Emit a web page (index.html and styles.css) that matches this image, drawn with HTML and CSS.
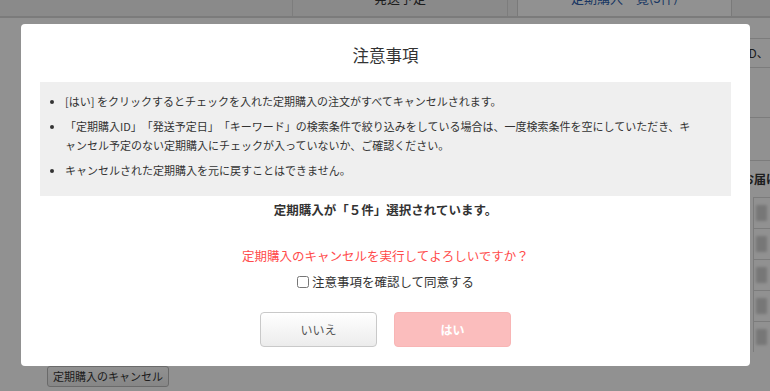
FILE: index.html
```html
<!DOCTYPE html>
<html lang="ja">
<head>
    <meta charset="UTF-8">
    <meta name="viewport" content="width=device-width, initial-scale=1.0">
    <title>定期購入のキャンセル</title>
    <link rel="stylesheet" href="styles.css">
</head>
<body>
    <div class="page">
        <div class="thead">
            <div class="th th-first"></div>
            <div class="th th-date">発送予定</div>
            <div class="th-gap"></div>
            <div class="th th-tab">定期購入一覧(5件)</div>
            <div class="th th-rest"></div>
        </div>

        <div class="page-body">
            <div class="main">
                <div class="main-fill"></div>
                <button class="btn-small">定期購入のキャンセル</button>
            </div>

            <div class="side">
                <div class="side-row side-row1"></div>
                <div class="side-row side-row2"><span class="side-text">ID、</span></div>
                <div class="side-row side-row3"></div>
                <div class="side-row side-row4"></div>
                <div class="side-label">お届け</div>
                <div class="side-table">
                    <div class="side-cell"><span class="thumb"></span><span class="link">日</span></div>
                    <div class="side-cell"><span class="thumb"></span><span class="link">日</span></div>
                    <div class="side-cell"><span class="thumb"></span><span class="link">日</span></div>
                    <div class="side-cell"><span class="thumb"></span><span class="link">日</span></div>
                    <div class="side-cell"><span class="thumb"></span><span class="link">日</span></div>
                </div>
            </div>
        </div>
    </div>

    <!-- 確認モーダル -->
    <div class="overlay">
        <div class="modal">
            <h2 class="modal-title">注意事項</h2>

            <ul class="notes">
                <li>[はい] をクリックするとチェックを入れた定期購入の注文がすべてキャンセルされます。</li>
                <li>「定期購入ID」「発送予定日」「キーワード」の検索条件で絞り込みをしている場合は、一度検索条件を空にしていただき、キャンセル予定のない定期購入にチェックが入っていないか、ご確認ください。</li>
                <li>キャンセルされた定期購入を元に戻すことはできません。</li>
            </ul>

            <p class="selected-count">定期購入が「５件」選択されています。</p>
            <p class="confirm-msg">定期購入のキャンセルを実行してよろしいですか？</p>

            <label class="agree">
                <input type="checkbox" id="agree-check">注意事項を確認して同意する
            </label>

            <div class="actions">
                <button class="btn btn-no">いいえ</button>
                <button class="btn btn-yes" disabled>はい</button>
            </div>
        </div>
    </div>
</body>
</html>
```

FILE: styles.css
```css
html, body {
    margin: 0;
    padding: 0;
}

body {
    font-family: "Noto Sans CJK JP", "Noto Sans", sans-serif;
    color: #333;
    background: #fff;
    overflow: hidden;
    text-spacing-trim: space-all;
}

/* 背景のページ */
.page {
    width: 770px;
}

.thead {
    display: flex;
    height: 28px;
    margin-top: -12px;
    background: #f3f3f3;
    border-bottom: 2px solid #d8d8d8;
    font-size: 13px;
    line-height: 20px;
}

.th {
    box-sizing: border-box;
    text-align: center;
}

.th-first {
    width: 293px;
    border-right: 1px solid #dcdcdc;
}

.th-date {
    width: 215px;
    border-right: 1px solid #dcdcdc;
}

.th-gap {
    width: 9px;
}

.th-tab {
    width: 215px;
    background: #fff;
    border-left: 1px solid #d6d6d6;
    border-right: 1px solid #d6d6d6;
    color: #2d5fae;
}

.th-rest {
    flex: 1;
}

.page-body {
    display: flex;
}

.main {
    width: 748px;
    flex-shrink: 0;
    padding-left: 47px;
    box-sizing: border-box;
}

.main-fill {
    height: 344px;
}

.btn-small {
    height: 21px;
    padding: 0 5px;
    font-family: inherit;
    font-size: 11px;
    color: #333;
    background: linear-gradient(#fff, #ececec);
    border: 1px solid #bbb;
    border-radius: 3px;
}

.side {
    flex: 1;
    font-size: 12px;
}

.side-row {
    border-bottom: 1px solid #dadada;
}

.side-row1 { height: 20px; }
.side-row2 { height: 28px; line-height: 28px; }
.side-row3 { height: 49px; }
.side-row4 { height: 42px; }

.side-text {
    margin-left: -3px;
}

.side-label {
    height: 36px;
    line-height: 36px;
    margin-left: -6px;
    font-weight: bold;
    white-space: nowrap;
}

.side-table {
    margin-left: 5px;
    border-left: 1px solid #dadada;
}

.side-cell {
    display: flex;
    align-items: center;
    gap: 2px;
    height: 30px;
    border-top: 1px solid #dadada;
    padding-left: 2px;
}

.thumb {
    width: 11px;
    height: 16px;
    background: #d2d2d2;
    filter: blur(1.5px);
}

.link {
    color: #4b3fae;
}

/* モーダル */
.overlay {
    position: fixed;
    inset: 0;
    background: rgba(0, 0, 0, 0.43);
    display: flex;
    justify-content: center;
    align-items: flex-start;
    padding-top: 24px;
}

.modal {
    width: 729px;
    box-sizing: border-box;
    padding: 19px 19px 19px;
    background: #fff;
    border-radius: 4px;
    margin-left: 1px;
}

.modal-title {
    margin: 0;
    text-align: center;
    font-size: 16.5px;
    line-height: 24px;
    font-weight: normal;
    color: #333;
}

.notes {
    margin: 15px 0 0;
    padding: 10px 33px 10px 25px;
    background: #efefef;
    font-size: 11px;
    line-height: 19px;
    color: #333;
}

.notes li {
    margin-bottom: 6px;
}

.selected-count {
    margin: 4px 0 0;
    text-align: center;
    font-size: 12.5px;
    line-height: 20px;
    font-weight: bold;
}

.confirm-msg {
    margin: 26px 0 0;
    text-align: center;
    font-size: 12.5px;
    line-height: 20px;
    color: #ff4b4b;
}

.agree {
    display: flex;
    justify-content: center;
    align-items: center;
    margin-top: 6px;
    font-size: 12.5px;
    line-height: 20px;
}

.agree input {
    width: 12px;
    height: 12px;
    margin: 0 3px 0 0;
}

.actions {
    display: flex;
    justify-content: center;
    gap: 17px;
    margin-top: 20px;
}

.btn {
    width: 117px;
    height: 35px;
    font-family: inherit;
    font-size: 12px;
    border-radius: 4px;
}

.btn-no {
    color: #555;
    background: linear-gradient(#fff, #ececec);
    border: 1px solid #c9c9c9;
}

.btn-yes {
    color: #fff;
    font-weight: bold;
    background: #fbbdbd;
    border: 1px solid #f8b5b5;
}
```
